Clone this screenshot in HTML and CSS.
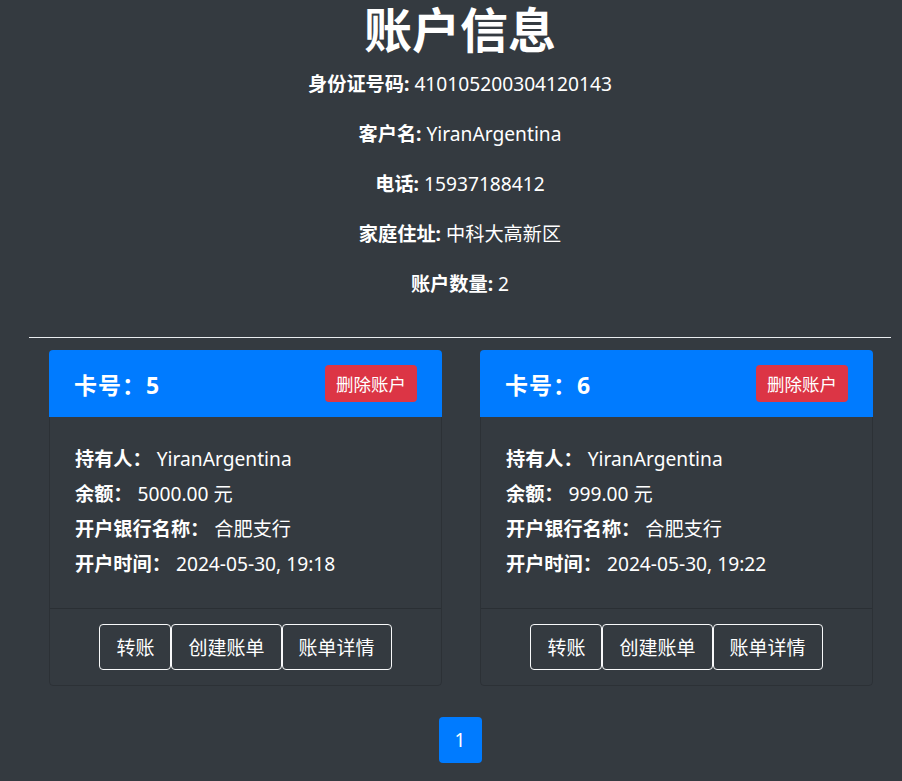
FILE: index.html
```html
<!DOCTYPE html>
<html lang="zh-CN">
<head>
<meta charset="utf-8">
<title>账户信息</title>
<link rel="stylesheet" href="styles.css">
</head>
<body>
<div class="page">
  <h1 class="title">账户信息</h1>
  <div class="info">
    <p><b>身份证号码:</b> 410105200304120143</p>
    <p><b>客户名:</b> YiranArgentina</p>
    <p><b>电话:</b> 15937188412</p>
    <p><b>家庭住址:</b> 中科大高新区</p>
    <p><b>账户数量:</b> 2</p>
  </div>
  <hr class="divider">
  <div class="cards">
    <div class="card">
      <div class="card-header">
        <span class="card-title">卡号：5</span>
        <button class="btn-danger">删除账户</button>
      </div>
      <div class="card-body">
        <p><b>持有人：</b> YiranArgentina</p>
        <p><b>余额：</b> 5000.00 元</p>
        <p><b>开户银行名称：</b> 合肥支行</p>
        <p><b>开户时间：</b> 2024-05-30, 19:18</p>
      </div>
      <div class="card-footer">
        <button class="btn-outline">转账</button>
        <button class="btn-outline">创建账单</button>
        <button class="btn-outline">账单详情</button>
      </div>
    </div>
    <div class="card">
      <div class="card-header">
        <span class="card-title">卡号：6</span>
        <button class="btn-danger">删除账户</button>
      </div>
      <div class="card-body">
        <p><b>持有人：</b> YiranArgentina</p>
        <p><b>余额：</b> 999.00 元</p>
        <p><b>开户银行名称：</b> 合肥支行</p>
        <p><b>开户时间：</b> 2024-05-30, 19:22</p>
      </div>
      <div class="card-footer">
        <button class="btn-outline">转账</button>
        <button class="btn-outline">创建账单</button>
        <button class="btn-outline">账单详情</button>
      </div>
    </div>
  </div>
  <div class="pagination">
    <span class="page-item">1</span>
  </div>
</div>
</body>
</html>
```
FILE: styles.css
```css
html, body {
  margin: 0;
  padding: 0;
  background: #343a40;
  overflow: hidden;
}
body {
  font-family: "Noto Sans", "Noto Sans CJK SC", sans-serif;
  color: #fff;
  font-size: 19px;
}
.page {
  padding-left: 18px;
  height: 781px;
  box-sizing: border-box;
}
.title {
  margin: 0;
  text-align: center;
  font-size: 48px;
  line-height: 60px;
  font-weight: bold;
}
.info {
  margin-top: 9px;
  display: flex;
  flex-direction: column;
  gap: 21px;
  text-align: center;
}
.info p {
  margin: 0;
  line-height: 29px;
  font-size: 19.2px;
}
.divider {
  margin: 39px 11px 12px;
  border: 0;
  border-top: 1px solid #e9ecef;
  height: 0;
}
.cards {
  display: grid;
  grid-template-columns: 393px 393px;
  column-gap: 38px;
  padding-left: 31px;
}
.card {
  border: 1px solid rgba(0, 0, 0, 0.15);
  border-radius: 4px;
}
.card-header {
  background: #007bff;
  height: 67px;
  margin: -1px -1px 0;
  padding: 0 25px;
  display: flex;
  align-items: center;
  justify-content: space-between;
  border-radius: 4px 4px 0 0;
}
.card-title {
  font-size: 23px;
  font-weight: bold;
  letter-spacing: 1px;
}
.btn-danger {
  background: #dc3545;
  color: #fff;
  border: 0;
  border-radius: 4px;
  height: 37px;
  padding: 0 11px;
  font-family: inherit;
  font-size: 17.5px;
}
.card-body {
  padding: 27px 25px 24px;
}
.card-body p {
  margin: 0 0 6px;
  line-height: 29px;
  font-size: 19.2px;
}
.card-footer {
  border-top: 1px solid rgba(0, 0, 0, 0.18);
  padding: 15px 0 15px;
  display: flex;
  justify-content: center;
}
.btn-outline {
  background: transparent;
  color: #fff;
  border: 1px solid #f8f9fa;
  border-radius: 4px;
  height: 46px;
  padding: 0 16px;
  font-family: inherit;
  font-size: 19px;
}
.pagination {
  display: flex;
  justify-content: center;
  margin-top: 31px;
}
.page-item {
  width: 43px;
  height: 46px;
  background: #007bff;
  border-radius: 4px;
  display: flex;
  align-items: center;
  justify-content: center;
  font-size: 19px;
}
```
